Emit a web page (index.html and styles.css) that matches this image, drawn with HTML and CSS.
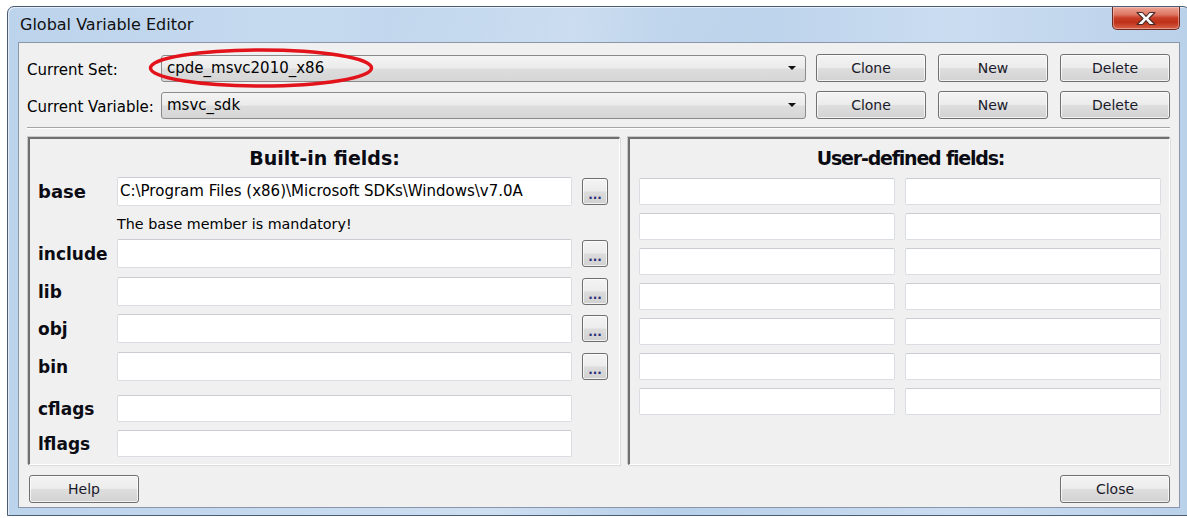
FILE: index.html
```html
<!DOCTYPE html>
<html lang="en">
<head>
<meta charset="utf-8">
<title>Global Variable Editor</title>
<link rel="stylesheet" href="styles.css">
</head>
<body>
<div class="window">
  <div class="titlebar">
    <span class="title">Global Variable Editor</span>
    <button class="close-btn" aria-label="Close">
      <svg width="24" height="15" viewBox="0 0 24 15">
        <path d="M3 1.5h5.5l3.5 3.8 3.5-3.8h5.5l-6 6 6 6h-5.5l-3.5-3.8-3.5 3.8h-5.5l6-6z" fill="#fbfbfb" stroke="#4a2a26" stroke-width="1.1" stroke-linejoin="round"/>
      </svg>
    </button>
  </div>

  <div class="client">
    <div class="selector-row">
      <span class="selector-label">Current Set:</span>
      <div class="combo"><span class="combo-text">cpde_msvc2010_x86</span><span class="combo-arrow"></span></div>
      <button class="btn btn-first">Clone</button>
      <button class="btn">New</button>
      <button class="btn">Delete</button>
    </div>
    <div class="selector-row row-gap">
      <span class="selector-label">Current Variable:</span>
      <div class="combo"><span class="combo-text">msvc_sdk</span><span class="combo-arrow"></span></div>
      <button class="btn btn-first">Clone</button>
      <button class="btn">New</button>
      <button class="btn">Delete</button>
    </div>

    <div class="separator"></div>

    <div class="panels">
      <section class="panel panel-builtin">
        <h2 class="panel-heading">Built-in fields:</h2>
        <div class="field-row gap-0">
          <span class="field-label label-base">base</span>
          <div class="textbox">C:\Program Files (x86)\Microsoft SDKs\Windows\v7.0A</div>
          <button class="browse-btn">...</button>
        </div>
        <div class="field-note">The base member is mandatory!</div>
        <div class="field-row gap-0">
          <span class="field-label">include</span>
          <div class="textbox"></div>
          <button class="browse-btn">...</button>
        </div>
        <div class="field-row">
          <span class="field-label">lib</span>
          <div class="textbox"></div>
          <button class="browse-btn">...</button>
        </div>
        <div class="field-row gap-8">
          <span class="field-label">obj</span>
          <div class="textbox"></div>
          <button class="browse-btn">...</button>
        </div>
        <div class="field-row">
          <span class="field-label">bin</span>
          <div class="textbox"></div>
          <button class="browse-btn">...</button>
        </div>
        <div class="field-row short gap-14">
          <span class="field-label">cflags</span>
          <div class="textbox"></div>
        </div>
        <div class="field-row short gap-8">
          <span class="field-label">lflags</span>
          <div class="textbox"></div>
        </div>
      </section>

      <section class="panel panel-user">
        <h2 class="panel-heading user-heading">User-defined fields:</h2>
        <div class="user-grid">
          <div class="textbox"></div><div class="textbox"></div>
          <div class="textbox"></div><div class="textbox"></div>
          <div class="textbox"></div><div class="textbox"></div>
          <div class="textbox"></div><div class="textbox"></div>
          <div class="textbox"></div><div class="textbox"></div>
          <div class="textbox"></div><div class="textbox"></div>
          <div class="textbox"></div><div class="textbox"></div>
        </div>
      </section>
    </div>

    <div class="footer">
      <button class="btn">Help</button>
      <button class="btn">Close</button>
    </div>

    <svg class="highlight-ring" width="226" height="40" viewBox="0 0 226 40">
      <ellipse cx="113" cy="20" rx="110.5" ry="18" fill="none" stroke="#e3131b" stroke-width="3.5"/>
    </svg>
  </div>
</div>
</body>
</html>
```

FILE: styles.css
```css
* {
  box-sizing: border-box;
}

html, body {
  margin: 0;
  padding: 0;
}

body {
  width: 1187px;
  height: 518px;
  overflow: hidden;
  background: #ffffff;
  font-family: "DejaVu Sans", "Liberation Sans", sans-serif;
  font-size: 15px;
  color: #000;
}

button {
  font-family: inherit;
  font-size: inherit;
  color: inherit;
  padding: 0;
  margin: 0;
}

/* ---- window frame ---- */
.window {
  margin: 6px 0 0 7px;
  width: 1183px;
  height: 510px;
  border: 1px solid #4a5b72;
  border-radius: 7px 7px 0 0;
  padding: 0 9px 7px 10px;
  display: flex;
  flex-direction: column;
  background:
    linear-gradient(100deg, rgba(255,255,255,0) 30%, rgba(255,255,255,0.25) 45%, rgba(255,255,255,0) 60%),
    linear-gradient(to right, #bcd3ec 0%, #c6daef 25%, #b6cfe9 55%, #cadcf0 80%, #bad1ea 100%);
  box-shadow: inset 1px 1px 0 rgba(255,255,255,0.6);
}

.titlebar {
  height: 35px;
  flex: none;
  display: flex;
  align-items: flex-start;
  justify-content: space-between;
}

.title {
  margin: 8px 0 0 2px;
  font-size: 16px;
  line-height: 19px;
  color: #111;
}

.close-btn {
  width: 68px;
  height: 23px;
  border: 1px solid #6a2a22;
  border-top: none;
  border-radius: 0 0 5px 5px;
  background: linear-gradient(to bottom, #eba595 0%, #dd7561 35%, #c83b25 50%, #bf3219 70%, #d9614a 100%);
  box-shadow: inset 0 0 0 1px rgba(255,220,210,0.45);
  display: flex;
  align-items: center;
  justify-content: center;
}

.close-btn svg {
  display: block;
}

/* ---- client area ---- */
.client {
  position: relative;
  flex: none;
  height: 466px;
  border: 1px solid #8b97a8;
  background: #f0f0f0;
  display: flex;
  flex-direction: column;
}

.selector-row {
  display: flex;
  align-items: center;
  height: 28px;
  margin-top: 11px;
  padding: 0 9px 0 8px;
}

.selector-row.row-gap {
  margin-top: 9px;
}

.selector-label {
  width: 134px;
  flex: none;
  line-height: 18px;
  padding-top: 3px;
}

.combo {
  flex: 1;
  height: 27px;
  border: 1px solid #8a8a8a;
  border-radius: 3px;
  background: linear-gradient(to bottom, #f4f4f4 0%, #ebebeb 48%, #dddddd 52%, #d6d6d6 100%);
  display: flex;
  align-items: center;
  padding: 0 9px 0 5px;
}

.combo-text {
  flex: 1;
  line-height: 18px;
}

.combo-arrow {
  width: 0;
  height: 0;
  border-left: 4px solid transparent;
  border-right: 4px solid transparent;
  border-top: 4px solid #111;
}

.btn {
  flex: none;
  width: 110px;
  height: 28px;
  margin-left: 12px;
  border: 1px solid #707070;
  border-radius: 3px;
  background: linear-gradient(to bottom, #f3f3f3 0%, #ececec 48%, #dedede 52%, #d2d2d2 100%);
  box-shadow: inset 0 0 0 1px rgba(255,255,255,0.7);
  font-size: 14px;
  line-height: 18px;
  color: #1a1a2a;
}

.btn.btn-first {
  margin-left: 10px;
}

.separator {
  margin: 8px 9px 0 8px;
  height: 2px;
  border-top: 1px solid #a6a6a6;
  border-bottom: 1px solid #ffffff;
}

/* ---- field panels ---- */
.panels {
  display: flex;
  gap: 8px;
  height: 328px;
  margin: 8px 9px 0 9px;
}

.panel {
  border-style: solid;
  border-width: 2px 1px 1px 2px;
  border-color: #6f6f6f #ffffff #ffffff #6f6f6f;
  box-shadow: -1px -1px 0 #c8c8c8, 1px 1px 0 #dcdcdc;
}

.panel-builtin {
  width: 592px;
  flex: none;
}

.panel-user {
  flex: 1;
}

.panel-heading {
  margin: 0 0 6px 0;
  padding-top: 6px;
  height: 32px;
  line-height: 26px;
  font-size: 19px;
  font-weight: bold;
  text-align: center;
  color: #0b0b14;
}

.user-heading {
  margin-bottom: 7px;
  padding-left: 22px;
  letter-spacing: -1.2px;
}

.field-row {
  display: grid;
  grid-template-columns: 79px 455px 36px;
  align-items: center;
  height: 29px;
  margin-top: 9px;
  padding-left: 8px;
}

.field-row.gap-0 {
  margin-top: 0;
}

.field-row.gap-8 {
  margin-top: 8px;
}

.field-row.gap-14 {
  margin-top: 14px;
}

.field-row.short {
  height: 27px;
}

.field-label {
  font-size: 17px;
  font-weight: bold;
  line-height: 20px;
  color: #0b0b14;
}

.field-label.label-base {
  font-size: 18px;
}

.textbox {
  height: 100%;
  background: #ffffff;
  border: 1px solid #dadee3;
  border-top-color: #c9cdd2;
  border-radius: 2px;
  padding: 0 2px;
  line-height: 27px;
  white-space: nowrap;
  overflow: hidden;
}

.field-note {
  height: 33px;
  padding: 9px 0 0 87px;
  font-size: 14.3px;
  line-height: 18px;
}

.browse-btn {
  justify-self: end;
  width: 26px;
  height: 27px;
  border: 1px solid #6e6e6e;
  border-radius: 3px;
  background: linear-gradient(to bottom, #f4f4f4 0%, #ececec 48%, #dcdcdc 52%, #d0d0d0 100%);
  box-shadow: inset 0 0 0 1px rgba(255,255,255,0.7);
  font-weight: bold;
  font-size: 12px;
  line-height: 12px;
  padding-top: 6px;
  color: #2a2f7a;
}

.user-grid {
  display: grid;
  grid-template-columns: 256px 256px;
  grid-auto-rows: 27px;
  gap: 8px 10px;
  padding-left: 9px;
}

.footer {
  display: flex;
  justify-content: space-between;
  margin-top: 10px;
  padding: 0 9px 0 10px;
}

.footer .btn {
  margin-left: 0;
}

/* annotation ring drawn over the set selector */
.highlight-ring {
  position: absolute;
  left: 129px;
  top: 5px;
  pointer-events: none;
}
```
